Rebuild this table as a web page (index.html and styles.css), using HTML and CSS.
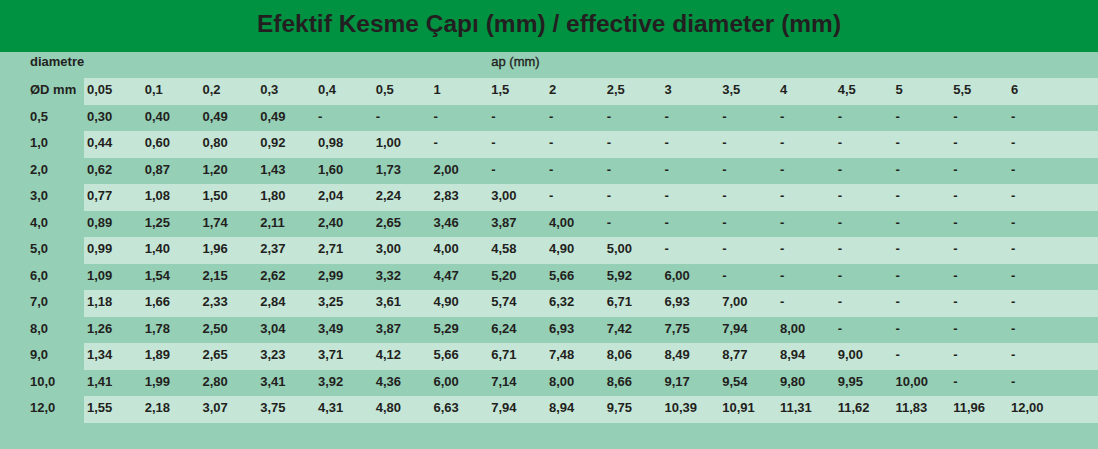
FILE: index.html
```html
<!DOCTYPE html>
<html>
<head>
<meta charset="utf-8">
<link rel="stylesheet" href="styles.css">
</head>
<body>
<div class="page">
  <div class="title">Efektif Kesme Çapı (mm) / effective diameter (mm)</div>
  <div class="row top">
    <div class="label">diametre</div>
    <div class="cells"><span class="c ap">ap (mm)</span></div>
  </div>
  <div class="row lt"><div class="label">ØD mm</div><div class="cells"><span class="c">0,05</span><span class="c">0,1</span><span class="c">0,2</span><span class="c">0,3</span><span class="c">0,4</span><span class="c">0,5</span><span class="c">1</span><span class="c">1,5</span><span class="c">2</span><span class="c">2,5</span><span class="c">3</span><span class="c">3,5</span><span class="c">4</span><span class="c">4,5</span><span class="c">5</span><span class="c">5,5</span><span class="c">6</span></div></div>
  <div class="row"><div class="label">0,5</div><div class="cells"><span class="c">0,30</span><span class="c">0,40</span><span class="c">0,49</span><span class="c">0,49</span><span class="c">-</span><span class="c">-</span><span class="c">-</span><span class="c">-</span><span class="c">-</span><span class="c">-</span><span class="c">-</span><span class="c">-</span><span class="c">-</span><span class="c">-</span><span class="c">-</span><span class="c">-</span><span class="c">-</span></div></div>
  <div class="row lt"><div class="label">1,0</div><div class="cells"><span class="c">0,44</span><span class="c">0,60</span><span class="c">0,80</span><span class="c">0,92</span><span class="c">0,98</span><span class="c">1,00</span><span class="c">-</span><span class="c">-</span><span class="c">-</span><span class="c">-</span><span class="c">-</span><span class="c">-</span><span class="c">-</span><span class="c">-</span><span class="c">-</span><span class="c">-</span><span class="c">-</span></div></div>
  <div class="row"><div class="label">2,0</div><div class="cells"><span class="c">0,62</span><span class="c">0,87</span><span class="c">1,20</span><span class="c">1,43</span><span class="c">1,60</span><span class="c">1,73</span><span class="c">2,00</span><span class="c">-</span><span class="c">-</span><span class="c">-</span><span class="c">-</span><span class="c">-</span><span class="c">-</span><span class="c">-</span><span class="c">-</span><span class="c">-</span><span class="c">-</span></div></div>
  <div class="row lt"><div class="label">3,0</div><div class="cells"><span class="c">0,77</span><span class="c">1,08</span><span class="c">1,50</span><span class="c">1,80</span><span class="c">2,04</span><span class="c">2,24</span><span class="c">2,83</span><span class="c">3,00</span><span class="c">-</span><span class="c">-</span><span class="c">-</span><span class="c">-</span><span class="c">-</span><span class="c">-</span><span class="c">-</span><span class="c">-</span><span class="c">-</span></div></div>
  <div class="row"><div class="label">4,0</div><div class="cells"><span class="c">0,89</span><span class="c">1,25</span><span class="c">1,74</span><span class="c">2,11</span><span class="c">2,40</span><span class="c">2,65</span><span class="c">3,46</span><span class="c">3,87</span><span class="c">4,00</span><span class="c">-</span><span class="c">-</span><span class="c">-</span><span class="c">-</span><span class="c">-</span><span class="c">-</span><span class="c">-</span><span class="c">-</span></div></div>
  <div class="row lt"><div class="label">5,0</div><div class="cells"><span class="c">0,99</span><span class="c">1,40</span><span class="c">1,96</span><span class="c">2,37</span><span class="c">2,71</span><span class="c">3,00</span><span class="c">4,00</span><span class="c">4,58</span><span class="c">4,90</span><span class="c">5,00</span><span class="c">-</span><span class="c">-</span><span class="c">-</span><span class="c">-</span><span class="c">-</span><span class="c">-</span><span class="c">-</span></div></div>
  <div class="row"><div class="label">6,0</div><div class="cells"><span class="c">1,09</span><span class="c">1,54</span><span class="c">2,15</span><span class="c">2,62</span><span class="c">2,99</span><span class="c">3,32</span><span class="c">4,47</span><span class="c">5,20</span><span class="c">5,66</span><span class="c">5,92</span><span class="c">6,00</span><span class="c">-</span><span class="c">-</span><span class="c">-</span><span class="c">-</span><span class="c">-</span><span class="c">-</span></div></div>
  <div class="row lt"><div class="label">7,0</div><div class="cells"><span class="c">1,18</span><span class="c">1,66</span><span class="c">2,33</span><span class="c">2,84</span><span class="c">3,25</span><span class="c">3,61</span><span class="c">4,90</span><span class="c">5,74</span><span class="c">6,32</span><span class="c">6,71</span><span class="c">6,93</span><span class="c">7,00</span><span class="c">-</span><span class="c">-</span><span class="c">-</span><span class="c">-</span><span class="c">-</span></div></div>
  <div class="row"><div class="label">8,0</div><div class="cells"><span class="c">1,26</span><span class="c">1,78</span><span class="c">2,50</span><span class="c">3,04</span><span class="c">3,49</span><span class="c">3,87</span><span class="c">5,29</span><span class="c">6,24</span><span class="c">6,93</span><span class="c">7,42</span><span class="c">7,75</span><span class="c">7,94</span><span class="c">8,00</span><span class="c">-</span><span class="c">-</span><span class="c">-</span><span class="c">-</span></div></div>
  <div class="row lt"><div class="label">9,0</div><div class="cells"><span class="c">1,34</span><span class="c">1,89</span><span class="c">2,65</span><span class="c">3,23</span><span class="c">3,71</span><span class="c">4,12</span><span class="c">5,66</span><span class="c">6,71</span><span class="c">7,48</span><span class="c">8,06</span><span class="c">8,49</span><span class="c">8,77</span><span class="c">8,94</span><span class="c">9,00</span><span class="c">-</span><span class="c">-</span><span class="c">-</span></div></div>
  <div class="row"><div class="label">10,0</div><div class="cells"><span class="c">1,41</span><span class="c">1,99</span><span class="c">2,80</span><span class="c">3,41</span><span class="c">3,92</span><span class="c">4,36</span><span class="c">6,00</span><span class="c">7,14</span><span class="c">8,00</span><span class="c">8,66</span><span class="c">9,17</span><span class="c">9,54</span><span class="c">9,80</span><span class="c">9,95</span><span class="c">10,00</span><span class="c">-</span><span class="c">-</span></div></div>
  <div class="row lt"><div class="label">12,0</div><div class="cells"><span class="c">1,55</span><span class="c">2,18</span><span class="c">3,07</span><span class="c">3,75</span><span class="c">4,31</span><span class="c">4,80</span><span class="c">6,63</span><span class="c">7,94</span><span class="c">8,94</span><span class="c">9,75</span><span class="c">10,39</span><span class="c">10,91</span><span class="c">11,31</span><span class="c">11,62</span><span class="c">11,83</span><span class="c">11,96</span><span class="c">12,00</span></div></div>
</div>
</body>
</html>
```

FILE: styles.css
```css
html, body {
  margin: 0;
  padding: 0;
}
body {
  width: 1098px;
  height: 449px;
  overflow: hidden;
  background: #95cfb6;
  font-family: "Liberation Sans", Arial, sans-serif;
  color: #231f20;
}
.page {
  display: flex;
  flex-direction: column;
}
.title {
  height: 52px;
  background: #009241;
  font-size: 24.5px;
  font-weight: bold;
  text-align: center;
  line-height: 48px;
}
.row {
  display: flex;
  height: 26.5px;
  font-size: 13px;
  font-weight: bold;
  line-height: 24px;
}
.row.top {
  height: 26px;
  line-height: 20px;
}
.label {
  width: 54px;
  padding-left: 30px;
  flex: none;
}
.cells {
  flex: 1;
  display: grid;
  grid-template-columns: repeat(17, 57.75px);
}
.row.lt .cells {
  background: #c5e6d7;
}
.c {
  padding-left: 3px;
  white-space: nowrap;
}
.ap {
  grid-column: 8;
  font-weight: normal;
  -webkit-text-stroke: 0.35px #231f20;
}
```
